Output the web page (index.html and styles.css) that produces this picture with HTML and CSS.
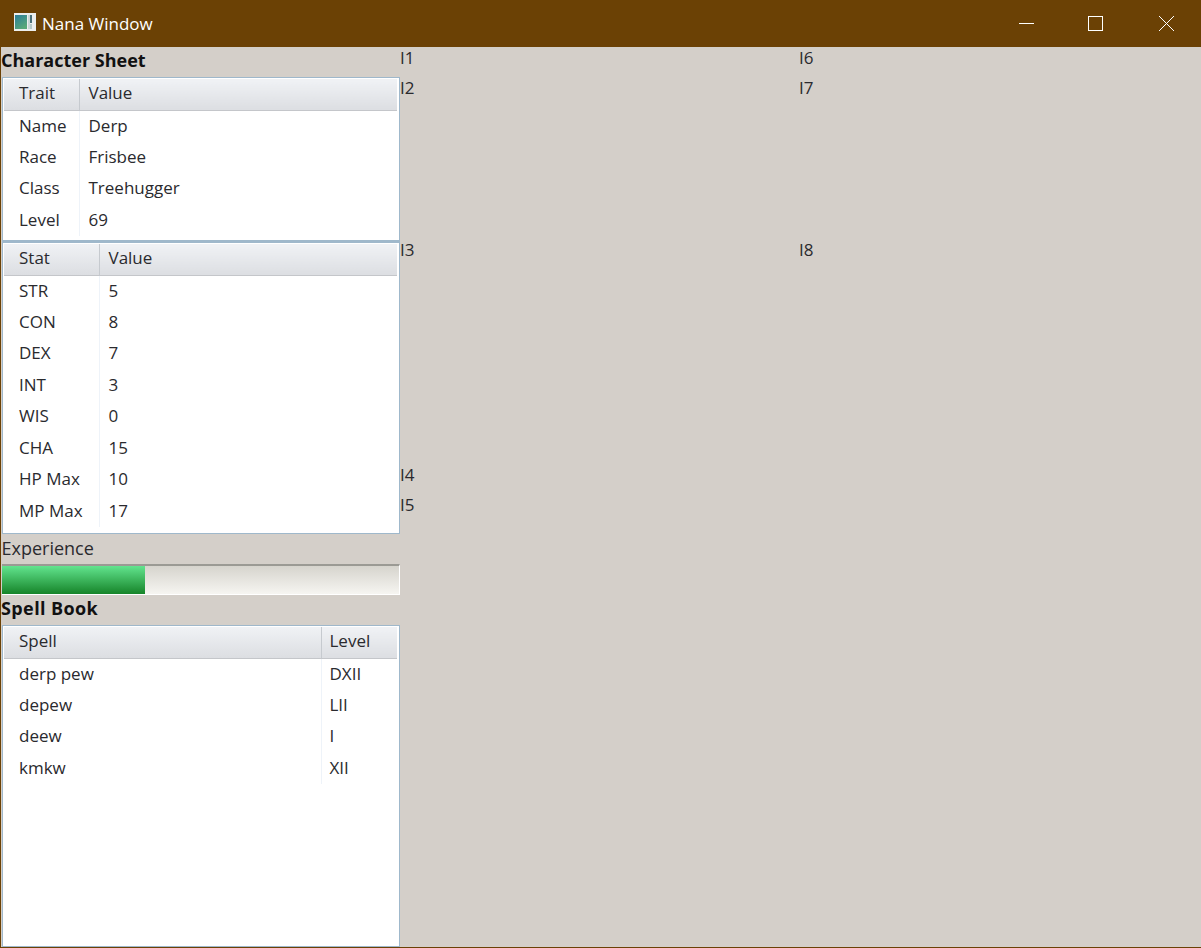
FILE: index.html
```html
<!DOCTYPE html>
<html lang="en">
<head>
    <meta charset="UTF-8">
    <title>Nana Window</title>
    <link rel="stylesheet" href="styles.css">
</head>
<body>
    <div class="window">
        <!-- Title bar -->
        <div class="titlebar">
            <svg class="app-icon" width="22" height="18" viewBox="0 0 22 18">
                <defs>
                    <linearGradient id="iconFill" x1="0" y1="0" x2="0.6" y2="1">
                        <stop offset="0" stop-color="#2a7d9a"/>
                        <stop offset="1" stop-color="#58a878"/>
                    </linearGradient>
                </defs>
                <rect x="0" y="0" width="22" height="18" fill="#eceeee"/>
                <rect x="1" y="2" width="12" height="14" fill="url(#iconFill)"/>
                <rect x="14" y="2" width="2" height="14" fill="#c9d6d6"/>
                <rect x="16" y="2" width="2" height="8" fill="#4a6f78"/>
                <rect x="16" y="11" width="2" height="5" fill="#b5c8c8"/>
            </svg>
            <span class="title-text">Nana Window</span>
            <div class="window-buttons">
                <svg class="win-btn" width="70" height="47" viewBox="0 0 70 47">
                    <path d="M28 23.5H43" stroke="#fff" fill="none"/>
                </svg>
                <svg class="win-btn" width="70" height="47" viewBox="0 0 70 47">
                    <rect x="27.5" y="16.5" width="14" height="14" stroke="#fff" fill="none"/>
                </svg>
                <svg class="win-btn" width="70" height="47" viewBox="0 0 70 47">
                    <path d="M28 16L43 31M43 16L28 31" stroke="#fff" fill="none"/>
                </svg>
            </div>
        </div>

        <div class="content">
            <!-- Left column -->
            <div class="sheet">
                <div class="heading">Character Sheet</div>

                <div class="grid-box box-traits">
                    <table>
                        <colgroup><col class="col-trait"><col></colgroup>
                        <thead><tr><th>Trait</th><th>Value</th></tr></thead>
                        <tbody>
                            <tr><td>Name</td><td>Derp</td></tr>
                            <tr><td>Race</td><td>Frisbee</td></tr>
                            <tr><td>Class</td><td>Treehugger</td></tr>
                            <tr><td>Level</td><td>69</td></tr>
                        </tbody>
                    </table>
                </div>

                <div class="grid-box box-stats">
                    <table>
                        <colgroup><col class="col-stat"><col></colgroup>
                        <thead><tr><th>Stat</th><th>Value</th></tr></thead>
                        <tbody>
                            <tr><td>STR</td><td>5</td></tr>
                            <tr><td>CON</td><td>8</td></tr>
                            <tr><td>DEX</td><td>7</td></tr>
                            <tr><td>INT</td><td>3</td></tr>
                            <tr><td>WIS</td><td>0</td></tr>
                            <tr><td>CHA</td><td>15</td></tr>
                            <tr><td>HP Max</td><td>10</td></tr>
                            <tr><td>MP Max</td><td>17</td></tr>
                        </tbody>
                    </table>
                </div>

                <div class="caption">Experience</div>
                <div class="progress"><div class="progress-fill"></div></div>

                <div class="heading heading-spell">Spell Book</div>

                <div class="grid-box box-spells">
                    <table>
                        <colgroup><col><col class="col-level"></colgroup>
                        <thead><tr><th>Spell</th><th>Level</th></tr></thead>
                        <tbody>
                            <tr><td>derp pew</td><td>DXII</td></tr>
                            <tr><td>depew</td><td>LII</td></tr>
                            <tr><td>deew</td><td>I</td></tr>
                            <tr><td>kmkw</td><td>XII</td></tr>
                        </tbody>
                    </table>
                </div>
            </div>

            <!-- Label columns -->
            <div class="labels">
                <div class="item item-1">I1</div>
                <div class="item item-2">I2</div>
                <div class="item item-3">I3</div>
                <div class="item item-1">I4</div>
                <div class="item item-1">I5</div>
            </div>
            <div class="labels">
                <div class="item item-1">I6</div>
                <div class="item item-2">I7</div>
                <div class="item item-3">I8</div>
            </div>
        </div>
    </div>
</body>
</html>
```

FILE: styles.css
```css
/* General */
body {
    margin: 0;
    font-family: "Open Sans", "Noto Sans", sans-serif;
    font-size: 17px;
    color: #2a2a2e;
    overflow: hidden;
}

.window {
    width: 1201px;
    height: 948px;
    display: flex;
    flex-direction: column;
    background-color: #d4cfc9;
    box-sizing: border-box;
    border-left: 1px solid #6b4105;
    border-bottom: 1px solid #6b4105;
}

/* Title bar */
.titlebar {
    height: 47px;
    margin-left: -1px;
    padding-left: 14px;
    flex-shrink: 0;
    display: flex;
    align-items: center;
    background-color: #6b4105;
    color: #fff;
}

.app-icon {
    margin-top: -3px;
    margin-right: 6px;
}

.title-text {
    font-size: 17px;
}

.window-buttons {
    margin-left: auto;
    display: flex;
}

.win-btn {
    display: block;
}

/* Main area */
.content {
    flex: 1;
    display: flex;
    padding-left: 1px;
}

.sheet {
    width: 398px;
    display: flex;
    flex-direction: column;
}

.heading {
    height: 30px;
    line-height: 27px;
    margin-left: -1px;
    font-size: 18px;
    font-weight: 700;
    color: #111;
}

.heading-spell {
    letter-spacing: 0.4px;
}

.caption {
    height: 30px;
    line-height: 29px;
    margin-left: -0.5px;
    font-size: 18px;
}

/* Tables */
.grid-box {
    box-sizing: border-box;
    padding: 1px 2px 0 1px;
    background-color: #fff;
    border: 1px solid #9fb8cb;
}

.box-traits {
    height: 164px;
}

.box-stats {
    height: 293px;
    border-top-width: 2px;
}

.box-spells {
    flex: 1;
}

table {
    width: 100%;
    table-layout: fixed;
    border-collapse: collapse;
}

.col-trait {
    width: 75px;
}

.col-stat {
    width: 95px;
}

.col-level {
    width: 76px;
}

th {
    box-sizing: border-box;
    height: 31px;
    padding: 0 0 4px 8px;
    text-align: left;
    font-weight: 400;
    background: linear-gradient(to bottom, #f0f2f5, #dcdee2);
    border-bottom: 1px solid #c4c6ca;
    border-left: 1px solid #c6cacf;
}

th:first-child {
    padding-left: 15px;
    border-left: none;
}

td {
    box-sizing: border-box;
    height: 31.5px;
    padding: 0 0 2px 8px;
    border-left: 1px solid #eef3f9;
}

td:first-child {
    padding-left: 15px;
    border-left: none;
}

.box-traits th + th,
.box-traits td + td,
.box-stats th + th,
.box-stats td + td {
    padding-left: 9px;
}

/* Progress bar */
.progress {
    height: 31px;
    box-sizing: border-box;
    background: linear-gradient(to bottom, #d6d4cd, #f6f5f1);
    border-top: 2px solid #9b9a94;
    border-right: 1px solid #fff;
    border-bottom: 1px solid #fff;
}

.progress-fill {
    width: 143px;
    height: 100%;
    background: linear-gradient(to bottom, #62e48e, #168429);
}

/* Label columns */
.labels {
    width: 399px;
}

.item {
    line-height: 22px;
}

.item-1 {
    height: 30px;
}

.item-2 {
    height: 162px;
}

.item-3 {
    height: 225px;
}
```
